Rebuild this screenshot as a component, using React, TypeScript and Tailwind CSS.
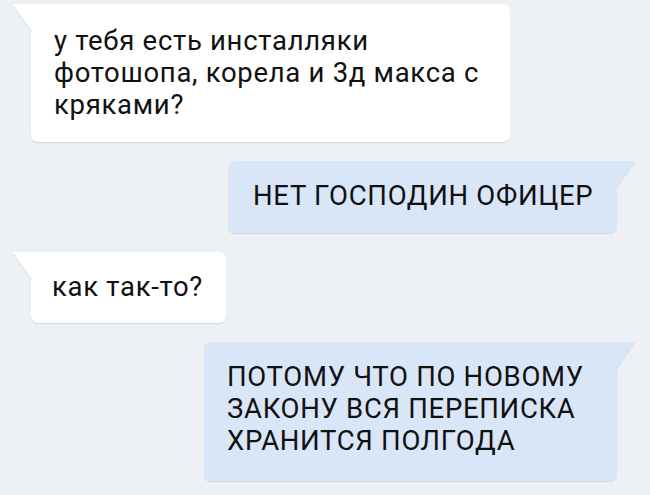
const font = { fontFamily: "Roboto, 'Noto Sans', sans-serif" };

type BubbleProps = {
  side: "in" | "out";
  className: string;
  children: React.ReactNode;
};

const Bubble = ({ side, className, children }: BubbleProps) => {
  const isIn = side === "in";
  const fill = isIn ? "#ffffff" : "#d9e6f7";
  return (
    <div
      className={`relative rounded-[7px] shadow-[0_1px_1px_#cfd6df] ${
        isIn ? "bg-white ml-[31px] rounded-tl-none" : "bg-[#d9e6f7] mr-[33px] self-end rounded-tr-none"
      } ${className}`}
    >
      {/* tail */}
      <svg
        className={`absolute top-0 ${isIn ? "left-[-19px]" : "right-[-19px] -scale-x-100"}`}
        width="20"
        height="28"
        viewBox="0 0 20 28"
      >
        <path d="M20 0 L2.5 0 Q0.5 0 1.5 1.8 L20 28 Z" fill={fill} />
        <path d="M1.6 1.9 L19.6 27.5" stroke="#d6dce4" strokeWidth="0.8" fill="none" />
      </svg>
      <div className="text-[27.5px] leading-[32px] tracking-[0.7px] text-[#111] whitespace-nowrap">
        {children}
      </div>
    </div>
  );
};

export default function App() {
  return (
    <div
      className="w-[650px] h-[495px] bg-[#edf0f4] flex flex-col pt-[4px] gap-[19px] overflow-hidden"
      style={font}
    >
      <Bubble side="in" className="w-[479px] h-[138px] pl-[23px] pt-[21px]">
        у тебя есть инсталляки
        <br />
        фотошопа, корела и 3д макса с
        <br />
        кряками?
      </Bubble>
      <Bubble side="out" className="w-[389px] h-[72px] pl-[25px] pt-[19px]">
        НЕТ ГОСПОДИН ОФИЦЕР
      </Bubble>
      <Bubble side="in" className="w-[195px] h-[71px] pl-[21px] pt-[19px]">
        как так-то?
      </Bubble>
      <Bubble side="out" className="w-[413px] h-[139px] pl-[23px] pt-[19px]">
        ПОТОМУ ЧТО ПО НОВОМУ
        <br />
        ЗАКОНУ ВСЯ ПЕРЕПИСКА
        <br />
        ХРАНИТСЯ ПОЛГОДА
      </Bubble>
    </div>
  );
}
